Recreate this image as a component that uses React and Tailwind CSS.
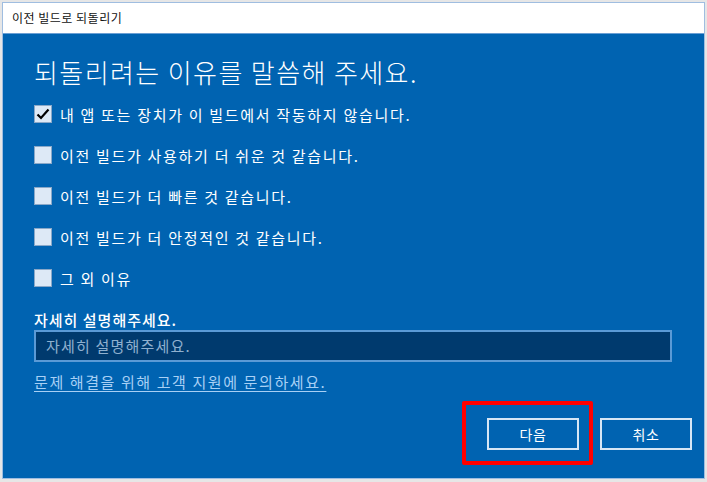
import React from 'react';

const reasons = [
  { label: '내 앱 또는 장치가 이 빌드에서 작동하지 않습니다.', checked: true },
  { label: '이전 빌드가 사용하기 더 쉬운 것 같습니다.', checked: false },
  { label: '이전 빌드가 더 빠른 것 같습니다.', checked: false },
  { label: '이전 빌드가 더 안정적인 것 같습니다.', checked: false },
  { label: '그 외 이유', checked: false },
];

function Checkbox({ checked }) {
  return (
    <span className="w-[18px] h-[18px] shrink-0 border border-[#8aa8c8] bg-[#dde9f6] flex items-center justify-center">
      {checked && (
        <svg width="14" height="14" viewBox="0 0 14 14">
          <path d="M1.5 7.5 L5 11 L12.5 2.5" fill="none" stroke="#000" strokeWidth="2.2" />
        </svg>
      )}
    </span>
  );
}

export default function App() {
  return (
    <div
      className="w-[707px] h-[482px] bg-[#e6e6e6] pt-[2px] pl-[2px]"
      style={{ fontFamily: '"Noto Sans CJK KR", "Noto Sans", sans-serif' }}
    >
      <div className="w-[703px] h-[477px] border border-[#9fbde0] flex flex-col">
        {/* 타이틀 바 */}
        <div className="h-[31px] bg-white border-b border-[#6a9fd4] flex items-center pl-[9px] text-[12px] text-[#111] tracking-[0.5px]">
          이전 빌드로 되돌리기
        </div>

        {/* 본문 */}
        <div className="flex-1 bg-[#0063b1] pl-[31px] pr-[11px] relative">
          <h1 className="text-white text-[26px] font-light tracking-[1.4px] mt-[20px] leading-[36px]">
            되돌리려는 이유를 말씀해 주세요.
          </h1>

          <div className="mt-[15px] flex flex-col gap-[23px]">
            {reasons.map((r) => (
              <label key={r.label} className="flex items-center gap-[8px] h-[18px]">
                <Checkbox checked={r.checked} />
                <span className="text-white text-[15px] tracking-[1.7px] leading-none">{r.label}</span>
              </label>
            ))}
          </div>

          <div className="mt-[24px] text-white text-[15px] tracking-[1px] font-medium leading-[18px]">
            자세히 설명해주세요.
          </div>
          <div className="mt-[1px] w-[638px] h-[32px] bg-[#003a6e] border-2 border-[#5b9ad6] flex items-center pl-[10px] text-[#8fb0cf] text-[15px] tracking-[1.2px]">
            자세히 설명해주세요.
          </div>

          <a className="inline-block mt-[10px] text-[#a8d0f5] text-[15px] tracking-[1.6px] underline underline-offset-[3px] leading-[20px]">
            문제 해결을 위해 고객 지원에 문의하세요.
          </a>

          <div className="absolute right-[12px] top-[384px] flex gap-[21px]">
            <div className="relative">
              <button className="w-[92px] h-[32px] border-2 border-[#d6e6f5] text-white text-[14px] tracking-[0.5px]">
                다음
              </button>
              <div className="absolute -left-[25px] -top-[17px] w-[131px] h-[64px] border-[4px] border-[#ff0000] rounded-[2px]" />
            </div>
            <button className="w-[92px] h-[32px] border-2 border-[#d6e6f5] text-white text-[14px] tracking-[0.5px]">
              취소
            </button>
          </div>
        </div>
      </div>
    </div>
  );
}
